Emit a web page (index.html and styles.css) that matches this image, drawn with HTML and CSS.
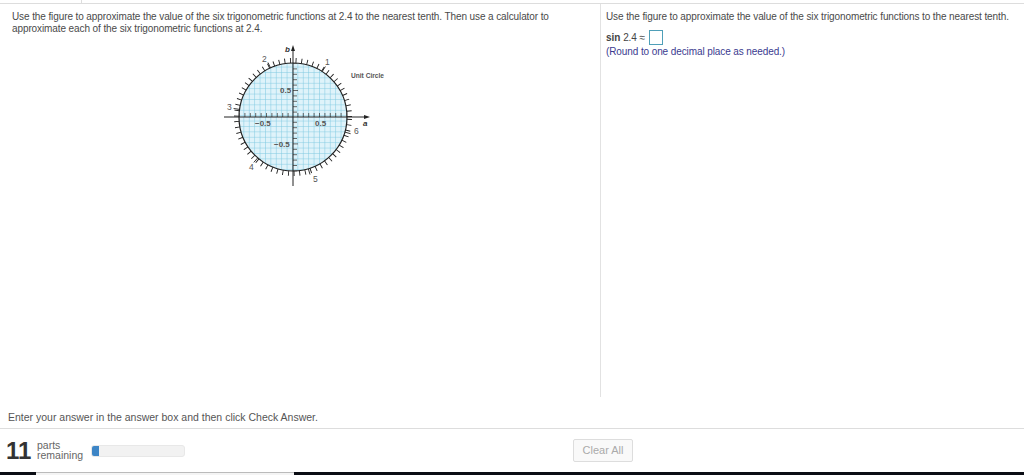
FILE: index.html
```html
<!DOCTYPE html>
<html lang="en">
<head>
<meta charset="UTF-8" />
<title>Unit Circle</title>
<link rel="stylesheet" href="styles.css">
</head>
<body>

<div class="top-rule"><span class="top-tick"></span></div>

<div class="panes">
  <div class="pane-left">
    <p class="question">Use the figure to approximate the value of the six trigonometric functions at 2.4 to the nearest tenth. Then use a calculator to approximate each of the six trigonometric functions at 2.4.</p>

    <svg class="figure" width="180" height="146" viewBox="0 0 180 146">
      <defs>
        <pattern id="grid" x="2.7" y="1.9" width="5.4" height="5.4" patternUnits="userSpaceOnUse">
          <path d="M5.4 0V5.4M0 5.4H5.4" class="grid-line" />
        </pattern>
      </defs>
      <!-- centre of the circle is 73,73 -->
      <circle cx="73" cy="73" r="54" class="disc" />
      <circle cx="73" cy="73" r="54" fill="url(#grid)" />
      <circle cx="73" cy="73" r="54" class="rim" />
      <circle cx="73" cy="73" r="56.5" class="ticks" transform="matrix(1 0 0 -1 0 146)" />
      <path class="major-ticks" d="M102.2 27.6L105.4 22.5M50.5 23.9L48 18.5M19.5 65.4L13.6 64.5M37.7 113.9L33.8 118.4M88.3 124.8L90 130.5M124.8 88.1L130.6 89.7" />
      <path class="axis-ticks" d="M19.5 73v-4M24.9 73v-4M30.3 73v-4M35.7 73v-4M41.1 73v-4M46.5 73v-4M51.9 73v-4M57.3 73v-4M62.7 73v-4M68.1 73v-4M77.9 73v-4M83.3 73v-4M88.7 73v-4M94.1 73v-4M99.5 73v-4M104.9 73v-4M110.3 73v-4M115.7 73v-4M121.1 73v-4M126.5 73v-4" />
      <path class="axis-ticks" d="M73 19.5h4M73 24.9h4M73 30.3h4M73 35.7h4M73 41.1h4M73 46.5h5M73 51.9h4M73 57.3h4M73 62.7h4M73 68.1h4M73 78.3h4M73 83.7h4M73 89.1h4M73 94.5h4M73 99.9h5M73 105.3h4M73 110.7h4M73 116.1h4M73 121.5h4M73 126.9h4" />
      <path class="axis" d="M4 73H146M73 6V142" />
      <path class="arrow" d="M73 1l2 6h-4zM150 73l-6 2v-4z" />
      <text x="65" y="8" class="var">b</text>
      <text x="143" y="82" class="var">a</text>
      <text x="42" y="18" class="num">2</text>
      <text x="105" y="21" class="num">1</text>
      <text x="7" y="66" class="num">3</text>
      <text x="29" y="126" class="num">4</text>
      <text x="93" y="138" class="num">5</text>
      <text x="134" y="90" class="num">6</text>
      <text x="35" y="82" class="tick-label">−0.5</text>
      <text x="95" y="82" class="tick-label">0.5</text>
      <text x="60" y="49" class="tick-label">0.5</text>
      <text x="54" y="103" class="tick-label">−0.5</text>
      <text x="131" y="34" class="caption">Unit Circle</text>
    </svg>
  </div>

  <div class="pane-right">
    <p class="question">Use the figure to approximate the value of the six trigonometric functions to the nearest tenth.</p>
    <div class="answer-row">
      <span class="fn">sin</span> 2.4 ≈ <span class="answer-box"></span>
    </div>
    <p class="hint">(Round to one decimal place as needed.)</p>
  </div>
</div>

<div class="instruction">Enter your answer in the answer box and then click Check Answer.</div>

<div class="footer">
  <div class="parts-count">11</div>
  <div class="parts-label">parts<br>remaining</div>
  <div class="progress"><div class="progress-fill"></div></div>
  <button class="clear-btn" type="button">Clear All</button>
</div>

<div class="bottom-strip"><div class="bottom-gap"></div></div>

</body>
</html>
```

FILE: styles.css
```css
html, body {
  margin: 0;
  height: 476px;
  overflow: hidden;
}
body {
  font-family: 'Liberation Sans', Arial, sans-serif;
  font-size: 10px;
  letter-spacing: -0.1px;
  color: #444;
  background: #fff;
}
p {
  margin: 0;
}
.top-rule {
  height: 3px;
  border-bottom: 1px solid #ddd;
  padding-left: 81px;
}
.top-tick {
  display: block;
  width: 1px;
  height: 3px;
  background: #ddd;
}
.panes {
  display: flex;
  height: 393px;
}
.pane-left {
  width: 588px;
  padding: 7px 0 0 12px;
}
.pane-right {
  flex: 1;
  border-left: 1px solid #e2e2e2;
  padding: 7px 0 0 5px;
}
.question {
  line-height: 12px;
  color: #4a4a4a;
}
.figure {
  display: block;
  margin: 9px 0 0 208px;
  letter-spacing: 0;
}
.disc {
  fill: #dff3fa;
}
.grid-line {
  fill: none;
  stroke: #7cc8e0;
  stroke-width: 1;
}
.rim {
  fill: none;
  stroke: #222;
  stroke-width: 1.2;
}
.ticks {
  fill: none;
  stroke: #222;
  stroke-width: 5;
  stroke-dasharray: 0.9 4.77;
}
.major-ticks {
  fill: none;
  stroke: #222;
  stroke-width: 0.9;
}
.axis {
  fill: none;
  stroke: #222;
  stroke-width: 1;
}
.axis-ticks {
  fill: none;
  stroke: #444;
  stroke-width: 0.8;
}
.arrow {
  fill: #222;
}
.num {
  font-size: 8.5px;
  fill: #555;
}
.var {
  font-size: 8px;
  font-style: italic;
  font-weight: bold;
  fill: #333;
}
.tick-label {
  font-size: 8px;
  font-weight: bold;
  fill: #555;
}
.caption {
  font-size: 6.6px;
  font-weight: bold;
  fill: #555;
}
.answer-row {
  margin-top: 5px;
  height: 18px;
  display: flex;
  align-items: center;
  gap: 3px;
}
.fn {
  font-weight: bold;
}
.answer-box {
  width: 12px;
  height: 13px;
  border: 1px solid #4f9fb8;
  margin-left: 1px;
}
.hint {
  line-height: 12px;
  color: #3b3b8f;
}
.instruction {
  height: 31px;
  box-sizing: border-box;
  padding: 14px 0 0 8px;
  font-size: 10.5px;
  line-height: 13px;
  letter-spacing: 0;
  color: #555;
}
.footer {
  height: 44px;
  border-top: 1px solid #ddd;
  box-sizing: border-box;
  display: flex;
  align-items: center;
  padding-left: 6px;
}
.parts-count {
  width: 31px;
  font-size: 24px;
  font-weight: bold;
  letter-spacing: 0;
  color: #333;
}
.parts-label {
  width: 54px;
  margin-top: -2px;
  font-size: 10.5px;
  letter-spacing: 0;
  line-height: 10px;
  color: #666;
}
.progress {
  width: 94px;
  height: 12px;
  background: #f2f2f2;
  border: 1px solid #e8e8e8;
  box-sizing: border-box;
  border-radius: 3px;
  overflow: hidden;
}
.progress-fill {
  width: 7px;
  height: 100%;
  background: #3d85c6;
}
.clear-btn {
  margin-left: 388px;
  width: 60px;
  height: 23px;
  padding: 0 0 2px;
  font-family: inherit;
  font-size: 11px;
  letter-spacing: 0;
  color: #aaa;
  background: #f9f9f9;
  border: 1px solid #ddd;
  border-radius: 2px;
}
.bottom-strip {
  height: 3px;
  background: #0a0d14;
  padding-left: 36px;
}
.bottom-gap {
  width: 258px;
  height: 3px;
  background: #f4f4f4;
  border-top: 1px solid #bbb;
  box-sizing: border-box;
}
```
